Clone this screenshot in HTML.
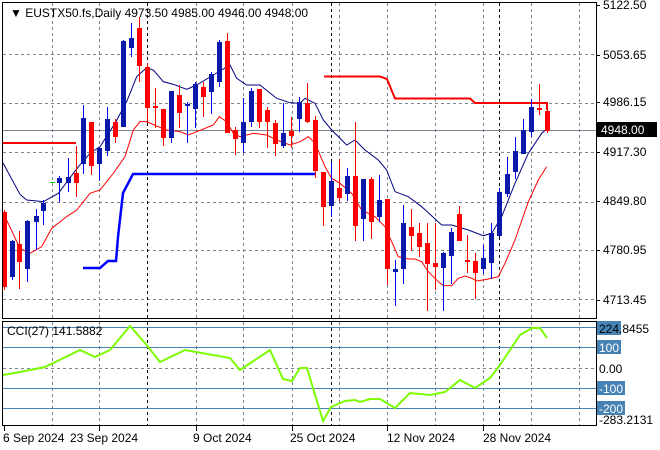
<!DOCTYPE html>
<html><head><meta charset="utf-8"><style>
html,body{margin:0;padding:0;background:#fff}
svg{display:block;font-family:"Liberation Sans",sans-serif}
</style></head><body>
<svg id="s" width="660" height="450" xmlns="http://www.w3.org/2000/svg">
<rect width="660" height="450" fill="#fff"/>
<g id="grid" stroke="#7a8590" stroke-dasharray="3,3" stroke-width="1"></g>
<line x1="2" y1="130.5" x2="596" y2="130.5" stroke="#7a8590"/>
<g id="lines" fill="none"></g>
<g id="candles"></g>
<rect x="2.5" y="2.5" width="594" height="316" fill="none" stroke="#000"/>
<rect x="2.5" y="321.5" width="594" height="104" fill="none" stroke="#000"/>
<g font-size="12" fill="#000">
<text x="10" y="17">▼ EUSTX50.fs,Daily  4973.50 4985.00 4946.00 4948.00</text>
<text x="7" y="335">CCI(27) 141.5882</text>
</g>
<g id="axis" font-size="12" fill="#000"></g>
</svg>
<script>
const NS="http://www.w3.org/2000/svg";
function el(p,t,a,txt){const e=document.createElementNS(NS,t);for(const k in a)e.setAttribute(k,a[k]);if(txt!==undefined)e.textContent=txt;p.appendChild(e);return e;}
const G=document.getElementById('grid'),L=document.getElementById('lines'),C=document.getElementById('candles'),A=document.getElementById('axis');
[54,103,152,202,250,299].forEach(y=>el(G,'line',{x1:3,x2:596,y1:y+.5,y2:y+.5}));
const vx=[52,99,196,243,292,339,387,435,483,531,579];
vx.forEach(x=>{el(G,'line',{x1:x+.5,x2:x+.5,y1:3,y2:318});el(G,'line',{x1:x+.5,x2:x+.5,y1:322,y2:425});});
[147,331,499].forEach(x=>{el(G,'line',{x1:x+.5,x2:x+.5,y1:3,y2:318,stroke:'#000'});el(G,'line',{x1:x+.5,x2:x+.5,y1:322,y2:425,stroke:'#000'});});
el(G,'line',{x1:3,x2:596,y1:368.5,y2:368.5});
[327,347,388,408].forEach(y=>el(L,'line',{x1:3,x2:596,y1:y+.5,y2:y+.5,stroke:'#4682b4'}));
function pl(pts,col,w){el(L,'polyline',{points:pts.map(p=>p.join(',')).join(' '),stroke:col,'stroke-width':w});}
const n1=[[8,427],[60,523],[80,540],[130,545],[175,520],[235,440],[270,400],[300,380],[345,310],[380,245],[410,170],[440,143],[460,150],[490,185],[520,193],[560,208],[590,195],[640,165],[665,150],[690,135],[710,175],[740,195],[780,195],[830,235],[870,248],[900,250]].map(p=>[p[0]/3,p[1]/3+20]);
const n2=[[30,115],[60,130],[85,180],[110,210],[155,255],[180,240],[210,270],[250,300],[275,330],[300,395],[340,410],[380,440],[440,495],[470,495],[520,510],[565,527],[590,520],[620,470],[660,370],[700,280],[740,220],[757,205]].map(p=>[p[0]/3+295,p[1]/3+60]);
pl(n1.concat(n2),'#000080',1);
const r1=[[8,575],[60,685],[90,700],[125,680],[155,625],[200,590],[230,570],[270,520],[300,510],[340,460],[375,410],[400,330],[420,305],[440,305],[470,318],[500,330],[540,335],[565,345],[590,335],[640,315],[658,290],[680,305],[700,340],[720,350],[760,340],[800,345],[830,360],[870,375],[900,365]].map(p=>[p[0]/3,p[1]/3+20]);
const r2=[[40,230],[60,250],[90,320],[110,355],[135,370],[170,400],[200,450],[240,470],[270,500],[290,545],[310,590],[340,597],[360,597],[380,605],[400,635],[430,665],[445,677],[470,677],[490,655],[510,648],[530,655],[545,663],[575,658],[610,650],[630,610],[660,540],[700,425],[730,360],[755,320]].map(p=>[p[0]/3+295,p[1]/3+60]);
pl(r1.concat(r2),'#ff0000',1);
pl([[3,143],[76,143]],'#ff0000',2);
pl([[324,76.5],[380,76.5],[387,79],[395,98.5],[470,98.5],[475,103],[547,103],[547,110]],'#ff0000',2);
pl([[83,268],[100,268],[108,261],[116,261],[118,237],[123,193],[133,174],[315,174]],'#0000ff',2.5);
pl([[50,182.5],[55,182.5]],'#00dd00',1);
pl([[3,375],[20,372],[45,367],[80,350],[95,357],[110,350],[130,326],[145,343],[160,362],[185,350],[230,358],[240,370],[270,350],[283,379],[292,381],[300,368],[307,368],[313,388],[323,421],[331,407],[345,401],[355,400],[360,402],[370,399],[380,399],[395,408],[410,393],[430,395],[445,392],[460,380],[475,388],[490,378],[500,365],[510,350],[520,335],[532,328],[540,328],[547,338]],'#7cfc00',2);
const cd=[[4,210,290,212,287,'r'],[12,240,280,241,277,'b'],[19,231,289,244,262,'r'],[27,220,282,221,269,'b'],[36,209,250,216,222,'b'],[43,200,225,203,211,'b'],
[59,176,202,178,183,'b'],[68,158,192,177,183,'b'],[76,146,197,173,183,'r'],[83,105,174,118,164,'b'],[91,122,175,122,166,'r'],[99,147,181,148,164,'b'],[107,107,156,119,151,'b'],[115,119,143,122,137,'r'],[123,40,127,41,127,'b'],[131,23,57,38,48,'b'],[139,17,82,28,66,'r'],[147,63,123,67,108,'r'],[155,88,128,106,108,'r'],[163,109,146,109,138,'r'],[171,91,143,91,138,'b'],[179,85,128,95,113,'r'],[187,102,143,104,106,'b'],[195,82,128,84,109,'b'],[203,82,117,87,97,'r'],[211,72,114,74,92,'b'],[219,40,87,42,82,'b'],[227,33,133,41,133,'r'],[235,127,155,130,139,'r'],[243,98,153,122,143,'b'],[251,88,127,91,122,'b'],[259,89,128,89,122,'r'],[267,107,148,110,122,'r'],[275,120,156,123,144,'r'],[283,103,148,133,146,'b'],[291,117,148,131,136,'r'],[299,97,132,102,119,'b'],
[307,83,123,103,122,'r'],[315,116,178,120,171,'r'],[323,172,226,172,207,'r'],[331,162,217,181,206,'b'],[339,159,201,188,198,'r'],[347,168,201,176,194,'b'],[355,122,241,176,226,'r'],[363,179,241,179,219,'b'],[371,177,239,179,222,'r'],[379,175,222,200,217,'b'],[387,199,285,199,269,'r'],[395,260,306,269,272,'b'],[403,205,284,223,269,'b'],[411,209,251,227,236,'r'],[419,223,257,233,247,'r'],[427,223,311,243,264,'r'],[435,223,290,263,267,'r'],[443,252,311,253,268,'b'],[451,228,284,232,256,'b'],[459,206,241,214,241,'r'],[467,235,273,260,262,'r'],[475,253,299,261,273,'r'],[483,245,274,258,269,'b'],[491,223,279,233,263,'b'],[499,188,237,192,236,'b'],[507,157,197,174,194,'b'],[515,137,179,151,172,'b'],[523,119,154,130,154,'b'],[531,99,137,107,132,'b'],[539,84,115,108,110,'r'],[547,103,133,111,131,'r']];
cd.forEach(c=>{const fc=c[5]=='r'?'#ff0000':'#0a1aa8';const wc=c[5]=='r'?'#ff0000':'#0000ff';
el(C,'line',{x1:c[0]+.5,x2:c[0]+.5,y1:c[1],y2:c[2],stroke:wc,'stroke-width':1});
el(C,'rect',{x:c[0]-2,y:c[3],width:5,height:Math.max(1,c[4]-c[3]),fill:fc});});
[[5122.50,5],[5053.65,55],[4986.15,102],[4917.30,152],[4849.80,201],[4780.95,250],[4713.45,300]].forEach(a=>{el(A,'line',{x1:596,x2:600,y1:a[1]+.5,y2:a[1]+.5,stroke:'#000'});el(A,'text',{x:603,y:a[1]+4},a[0].toFixed(2));});
el(A,'rect',{x:597,y:122,width:60,height:15,fill:'#000'});
el(A,'text',{x:601,y:134,fill:'#fff'},'4948.00');
el(A,'rect',{x:597,y:321,width:24,height:14,fill:'#4682b4'});
el(A,'text',{x:599,y:333},'224.8455');
[['100',347,24],['-100',388,28],['-200',408,28]].forEach(a=>{el(A,'rect',{x:597,y:a[1]-7,width:a[2],height:14,fill:'#4682b4'});el(A,'text',{x:599,y:a[1]+5,fill:'#fff'},a[0]);});
el(A,'text',{x:599,y:373},'0.00');
el(A,'text',{x:599,y:424},'-283.2131');
[['6 Sep 2024',3,4],['23 Sep 2024',70,99],['9 Oct 2024',193,196],['25 Oct 2024',290,292],['12 Nov 2024',387,387],['28 Nov 2024',483,483]].forEach(d=>{el(A,'line',{x1:d[2]+.5,x2:d[2]+.5,y1:426,y2:431,stroke:'#000'});el(A,'text',{x:d[1],y:442},d[0]);});
</script>
</body></html>
